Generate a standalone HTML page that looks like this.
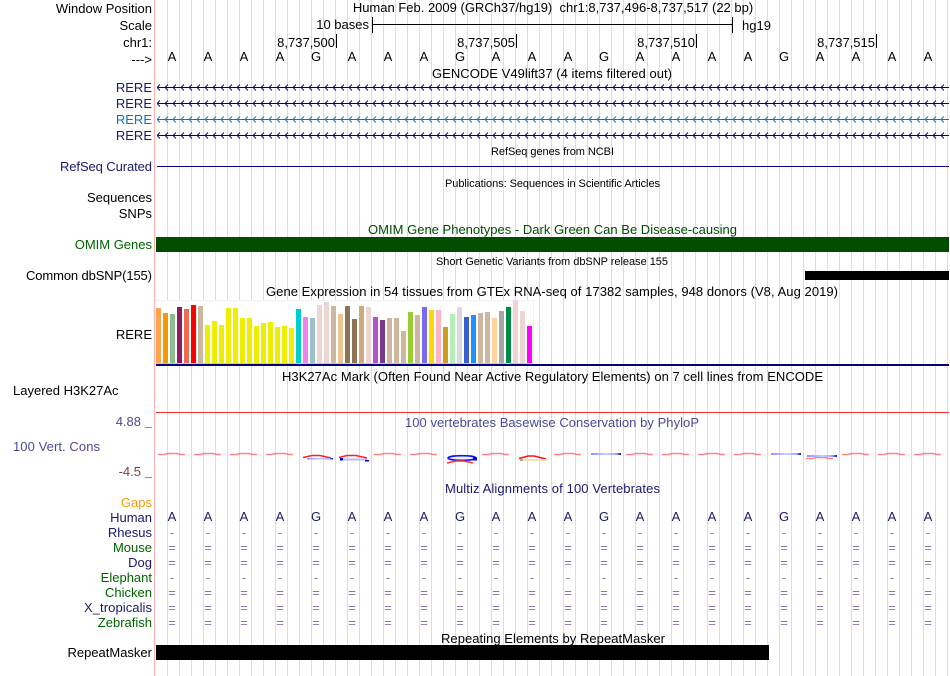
<!DOCTYPE html>
<html><head><meta charset="utf-8"><title>Genome Browser</title>
<style>
html,body{margin:0;padding:0;background:#fff;width:950px;height:676px;overflow:hidden}
svg{display:block}
text{font-family:"Liberation Sans",sans-serif;font-size:13px;fill:#000}
.l{text-anchor:end}
.c{text-anchor:middle}
.s{font-size:11px}
.n{fill:#191970}
.g{fill:#006400}
.b{text-anchor:middle}
.d{text-anchor:middle;font-size:13px;fill:#7a7ab4}
.w{fill:none}
</style></head><body>
<svg width="950" height="676" viewBox="0 0 950 676" xmlns="http://www.w3.org/2000/svg">
<defs>
<pattern id="grid" patternUnits="userSpaceOnUse" x="167" y="0" width="12" height="10"><rect width="1" height="10" fill="#dadaf6"/></pattern>
<pattern id="an" patternUnits="userSpaceOnUse" x="156" y="84" width="8" height="7"><path d="M4 0.5 L1 3.5 L4 6.5" fill="none" stroke="#000080" stroke-width=".9"/></pattern>
<pattern id="an2" patternUnits="userSpaceOnUse" x="156" y="100" width="8" height="7"><path d="M4 0.5 L1 3.5 L4 6.5" fill="none" stroke="#000080" stroke-width=".9"/></pattern>
<pattern id="at" patternUnits="userSpaceOnUse" x="156" y="116" width="8" height="7"><path d="M4 0.5 L1 3.5 L4 6.5" fill="none" stroke="#1272b4" stroke-width=".9"/></pattern>
<pattern id="an4" patternUnits="userSpaceOnUse" x="156" y="132" width="8" height="7"><path d="M4 0.5 L1 3.5 L4 6.5" fill="none" stroke="#000080" stroke-width=".9"/></pattern>
<linearGradient id="bf" x1="0" x2="1" y1="0" y2="0"><stop offset="0" stop-color="#9090ff"/><stop offset=".5" stop-color="#ccccff"/><stop offset=".85" stop-color="#a8a8ff"/><stop offset="1" stop-color="#0000dd"/></linearGradient>
</defs>
<rect width="950" height="676" fill="#fff"/>
<rect x="167" y="0" width="783" height="676" fill="url(#grid)"/>
<rect x="154" y="0" width="1" height="676" fill="#ffb0b0"/>

<!-- header labels -->
<text x="152" y="13" class="l">Window Position</text>
<text x="152" y="30" class="l">Scale</text>
<text x="152" y="47" class="l">chr1:</text>
<text x="152" y="64" class="l">---&gt;</text>
<text x="553" y="12" class="c">Human Feb. 2009 (GRCh37/hg19)&#160;&#160;chr1:8,737,496-8,737,517 (22 bp)</text>
<text x="369" y="29" class="l">10 bases</text>
<rect x="372" y="17" width="1" height="16" fill="#000"/>
<rect x="372" y="24" width="361" height="1" fill="#000"/>
<rect x="732" y="17" width="1" height="16" fill="#000"/>
<text x="742" y="30">hg19</text>
<text x="335" y="47" class="l">8,737,500</text><rect x="336" y="34" width="1" height="14" fill="#000"/>
<text x="515" y="47" class="l">8,737,505</text><rect x="516" y="34" width="1" height="14" fill="#000"/>
<text x="695" y="47" class="l">8,737,510</text><rect x="696" y="34" width="1" height="14" fill="#000"/>
<text x="875" y="47" class="l">8,737,515</text><rect x="876" y="34" width="1" height="14" fill="#000"/>
<text class="b" y="61" x="172 208 244 280 316 352 388 424 460 496 532 568 604 640 676 712 748 784 820 856 892 928">AAAAGAAAGAAAGAAAAGAAAA</text>

<!-- GENCODE -->
<text x="552" y="78" class="c" textLength="240">GENCODE V49lift37 (4 items filtered out)</text>
<text x="152" y="92" class="l n">RERE</text>
<text x="152" y="108" class="l n">RERE</text>
<text x="152" y="124" class="l" style="fill:#1272b4">RERE</text>
<text x="152" y="140" class="l n">RERE</text>
<rect x="157" y="87" width="792" height="1" fill="#000080"/><rect x="157" y="84" width="792" height="7" fill="url(#an)"/>
<rect x="157" y="103" width="792" height="1" fill="#000080"/><rect x="157" y="100" width="792" height="7" fill="url(#an2)"/>
<rect x="157" y="119" width="792" height="1" fill="#1272b4"/><rect x="157" y="116" width="792" height="7" fill="url(#at)"/>
<rect x="157" y="135" width="792" height="1" fill="#000080"/><rect x="157" y="132" width="792" height="7" fill="url(#an4)"/>

<!-- RefSeq -->
<text x="552.5" y="155" class="c s" textLength="123">RefSeq genes from NCBI</text>
<text x="152" y="171" class="l n" textLength="92">RefSeq Curated</text>
<rect x="157" y="166" width="792" height="1" fill="#000080"/>

<text x="552.5" y="187" class="c s" textLength="215">Publications: Sequences in Scientific Articles</text>
<text x="152" y="202" class="l">Sequences</text>
<text x="152" y="218" class="l">SNPs</text>

<!-- OMIM -->
<text x="552.5" y="234" class="c" style="fill:#004d00" textLength="369">OMIM Gene Phenotypes - Dark Green Can Be Disease-causing</text>
<text x="152" y="249" class="l" style="fill:#006400">OMIM Genes</text>
<rect x="156" y="237" width="793" height="15" fill="#004d00"/>

<!-- dbSNP -->
<text x="552" y="265" class="c s" textLength="232">Short Genetic Variants from dbSNP release 155</text>
<text x="152" y="280" class="l" textLength="126">Common dbSNP(155)</text>
<rect x="805" y="271" width="144" height="9" fill="#000"/>

<!-- GTEx -->
<text x="552" y="296" class="c" textLength="572">Gene Expression in 54 tissues from GTEx RNA-seq of 17382 samples, 948 donors (V8, Aug 2019)</text>
<text x="152" y="339" class="l">RERE</text>
<rect x="156" y="300" width="377" height="63" fill="#fff"/>
<rect x="156" y="300" width="377" height="1" fill="#f0f0fa"/>
<rect x="533" y="300" width="1" height="63" fill="#f0f0fa"/>
<g>
<rect x="156" y="308" width="5" height="55" fill="#FFA54F"/>
<rect x="163" y="313" width="5" height="50" fill="#EE9A00"/>
<rect x="170" y="314" width="5" height="49" fill="#8FBC8F"/>
<rect x="177" y="307" width="5" height="56" fill="#8B1C62"/>
<rect x="184" y="309" width="5" height="54" fill="#EE6A50"/>
<rect x="191" y="305" width="5" height="58" fill="#FF0000"/>
<rect x="198" y="306" width="5" height="57" fill="#CDB79E"/>
<rect x="205" y="325" width="5" height="38" fill="#EEEE00"/>
<rect x="212" y="321" width="5" height="42" fill="#EEEE00"/>
<rect x="219" y="325" width="5" height="38" fill="#EEEE00"/>
<rect x="226" y="308" width="5" height="55" fill="#EEEE00"/>
<rect x="233" y="308" width="5" height="55" fill="#EEEE00"/>
<rect x="240" y="318" width="5" height="45" fill="#EEEE00"/>
<rect x="247" y="318" width="5" height="45" fill="#EEEE00"/>
<rect x="254" y="326" width="5" height="37" fill="#EEEE00"/>
<rect x="261" y="323" width="5" height="40" fill="#EEEE00"/>
<rect x="268" y="322" width="5" height="41" fill="#EEEE00"/>
<rect x="275" y="327" width="5" height="36" fill="#EEEE00"/>
<rect x="282" y="326" width="5" height="37" fill="#EEEE00"/>
<rect x="289" y="328" width="5" height="35" fill="#EEEE00"/>
<rect x="296" y="309" width="5" height="54" fill="#00CDCD"/>
<rect x="303" y="317" width="5" height="46" fill="#EE82EE"/>
<rect x="310" y="318" width="5" height="45" fill="#9AC0CD"/>
<rect x="317" y="305" width="5" height="58" fill="#EED5D2"/>
<rect x="324" y="302" width="5" height="61" fill="#EED5D2"/>
<rect x="331" y="306" width="5" height="57" fill="#CDB79E"/>
<rect x="338" y="314" width="5" height="49" fill="#EEC591"/>
<rect x="345" y="306" width="5" height="57" fill="#8B7355"/>
<rect x="352" y="319" width="5" height="44" fill="#8B7355"/>
<rect x="359" y="306" width="5" height="57" fill="#CDAA7D"/>
<rect x="366" y="307" width="5" height="56" fill="#EED5D2"/>
<rect x="373" y="317" width="5" height="46" fill="#B452CD"/>
<rect x="380" y="320" width="5" height="43" fill="#7A378B"/>
<rect x="387" y="318" width="5" height="45" fill="#CDB79E"/>
<rect x="394" y="318" width="5" height="45" fill="#CDB79E"/>
<rect x="401" y="331" width="5" height="32" fill="#CDB79E"/>
<rect x="408" y="312" width="5" height="51" fill="#9ACD32"/>
<rect x="415" y="315" width="5" height="48" fill="#CDB79E"/>
<rect x="422" y="307" width="5" height="56" fill="#7B68EE"/>
<rect x="429" y="310" width="5" height="53" fill="#FFD700"/>
<rect x="436" y="310" width="5" height="53" fill="#FFB5C5"/>
<rect x="443" y="327" width="5" height="36" fill="#CD9B1D"/>
<rect x="450" y="314" width="5" height="49" fill="#B4EEB4"/>
<rect x="457" y="307" width="5" height="56" fill="#D9D9D9"/>
<rect x="464" y="317" width="5" height="46" fill="#3A5FCD"/>
<rect x="471" y="315" width="5" height="48" fill="#1E90FF"/>
<rect x="478" y="313" width="5" height="50" fill="#CDB79E"/>
<rect x="485" y="312" width="5" height="51" fill="#CDB79E"/>
<rect x="492" y="318" width="5" height="45" fill="#FFD39B"/>
<rect x="499" y="311" width="5" height="52" fill="#A6A6A6"/>
<rect x="506" y="307" width="5" height="56" fill="#008B45"/>
<rect x="513" y="300" width="5" height="63" fill="#EED5D2"/>
<rect x="520" y="311" width="5" height="52" fill="#EED5D2"/>
<rect x="527" y="326" width="5" height="37" fill="#FF00FF"/>
</g>
<rect x="156" y="363" width="377" height="1" fill="#c8c8c8"/>
<rect x="156" y="364" width="793" height="2" fill="#000080"/>

<!-- H3K27Ac -->
<text x="552.5" y="381" class="c" textLength="541">H3K27Ac Mark (Often Found Near Active Regulatory Elements) on 7 cell lines from ENCODE</text>
<text x="13" y="395">Layered H3K27Ac</text>
<rect x="156" y="412" width="793" height="1" fill="#f03030"/>

<!-- Cons -->
<text x="552" y="427" class="c" style="fill:#4a4a96" textLength="294">100 vertebrates Basewise Conservation by PhyloP</text>
<text x="141" y="426" class="l" style="fill:#4a4a96">4.88</text>
<rect x="145" y="427" width="7" height="1" fill="#8888a8"/>
<text x="13" y="451" style="fill:#4a4a96" textLength="87">100 Vert. Cons</text>
<text x="141" y="476" class="l" style="fill:#8a3a3a">-4.5</text>
<rect x="145" y="477" width="7" height="1" fill="#a08888"/>
<g class="w" stroke="#f33" stroke-opacity=".6" stroke-width="1.5">
<path d="M158 454.5H164L168 453.5H177L181 454.5H185"/>
<path d="M194 454.5H200L204 453.5H213L217 454.5H221"/>
<path d="M230 454.5H236L240 453.5H249L253 454.5H257"/>
<path d="M266 454.5H272L276 453.5H285L289 454.5H293"/>
<path d="M374 454.5H380L384 453.5H393L397 454.5H401"/>
<path d="M410 454.5H416L420 453.5H429L433 454.5H437"/>
<path d="M482 454.5H488L492 453.5H501L505 454.5H509"/>
<path d="M554 454.5H560L564 453.5H573L577 454.5H581"/>
<path d="M626 454.5H632L636 453.5H645L649 454.5H653"/>
<path d="M662 454.5H668L672 453.5H681L685 454.5H689"/>
<path d="M698 454.5H704L708 453.5H717L721 454.5H725"/>
<path d="M734 454.5H740L744 453.5H753L757 454.5H761"/>
<path d="M842 454.5H848L852 453.5H861L865 454.5H869"/>
<path d="M878 454.5H884L888 453.5H897L901 454.5H905"/>
<path d="M914 454.5H920L924 453.5H933L937 454.5H941"/>
<path d="M806 458.5H812L816 457.5H825L829 458.5H833"/>
</g>
<!-- G at 316 -->
<path d="M303 457.5L312 455.5H320L331 458" fill="none" stroke="#f22" stroke-width="1.5"/>
<rect x="307" y="458" width="26" height="1.5" fill="url(#bf)"/>
<!-- A at 352 -->
<path d="M339 457.5L347 455.5H356L367 458" fill="none" stroke="#f22" stroke-width="1.5"/>
<path d="M340 458.5H366L369 460.5H342Z" fill="#b8b8ff"/>
<rect x="340" y="458" width="3" height="2.5" fill="#0000dd"/>
<rect x="365" y="460" width="4" height="1.5" fill="#0000dd"/>
<!-- G at 460 -->
<ellipse cx="462" cy="458" rx="14" ry="2.3" fill="#eeeeff" stroke="#1010ee" stroke-width="1.6"/>
<rect x="473" y="457.5" width="4" height="3" fill="#0000dd"/>
<path d="M447 463L456 461H464L473 463" fill="none" stroke="#f33" stroke-width="1.5"/>
<!-- A at 532 -->
<path d="M519 458.5L528 456H534L546 459" fill="none" stroke="#f11" stroke-width="1.6"/>
<rect x="520" y="459" width="27" height="2" fill="#e8e4b8"/>
<rect x="520" y="459" width="3" height="2" fill="#b8b060"/>
<!-- blue bars -->
<rect x="591" y="453" width="30" height="2" fill="url(#bf)"/>
<rect x="771" y="453" width="30" height="2" fill="url(#bf)"/>
<rect x="807" y="455" width="30" height="2" fill="url(#bf)"/>

<!-- Multiz -->
<text x="152" y="507" class="l" style="fill:#f59b00">Gaps</text>
<text x="552.5" y="493" class="c n" textLength="215">Multiz Alignments of 100 Vertebrates</text>
<text x="152" y="522" class="l n">Human</text>
<text x="152" y="537" class="l n">Rhesus</text>
<text x="152" y="552" class="l g">Mouse</text>
<text x="152" y="567" class="l n">Dog</text>
<text x="152" y="582" class="l g">Elephant</text>
<text x="152" y="597" class="l g">Chicken</text>
<text x="152" y="612" class="l n" textLength="68">X_tropicalis</text>
<text x="152" y="627" class="l g">Zebrafish</text>
<text class="b n" y="521" x="172 208 244 280 316 352 388 424 460 496 532 568 604 640 676 712 748 784 820 856 892 928">AAAAGAAAGAAAGAAAAGAAAA</text>
<text class="d" y="537" x="172 208 244 280 316 352 388 424 460 496 532 568 604 640 676 712 748 784 820 856 892 928">----------------------</text>
<text class="d" y="552" x="172 208 244 280 316 352 388 424 460 496 532 568 604 640 676 712 748 784 820 856 892 928">======================</text>
<text class="d" y="567" x="172 208 244 280 316 352 388 424 460 496 532 568 604 640 676 712 748 784 820 856 892 928">======================</text>
<text class="d" y="582" x="172 208 244 280 316 352 388 424 460 496 532 568 604 640 676 712 748 784 820 856 892 928">----------------------</text>
<text class="d" y="597" x="172 208 244 280 316 352 388 424 460 496 532 568 604 640 676 712 748 784 820 856 892 928">======================</text>
<text class="d" y="612" x="172 208 244 280 316 352 388 424 460 496 532 568 604 640 676 712 748 784 820 856 892 928">======================</text>
<text class="d" y="627" x="172 208 244 280 316 352 388 424 460 496 532 568 604 640 676 712 748 784 820 856 892 928">======================</text>

<!-- RepeatMasker -->
<text x="553" y="643" class="c" textLength="224">Repeating Elements by RepeatMasker</text>
<text x="152" y="657" class="l">RepeatMasker</text>
<rect x="156" y="645" width="613" height="15" fill="#000"/>
</svg>
</body></html>
